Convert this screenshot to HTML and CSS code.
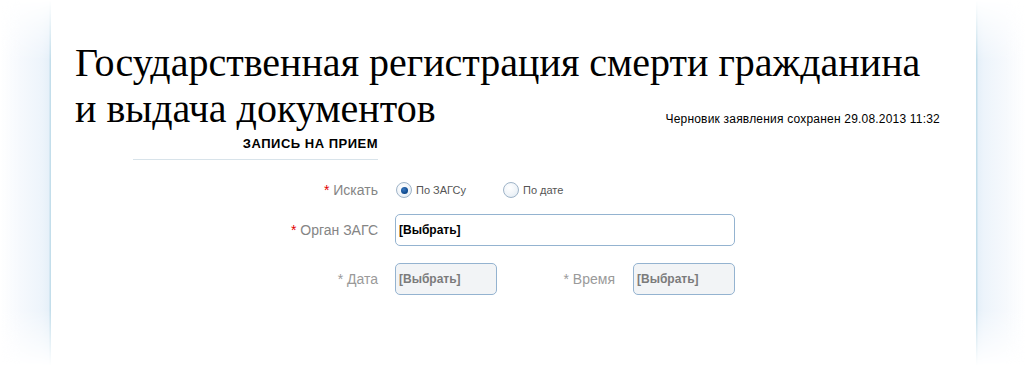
FILE: index.html
```html
<!DOCTYPE html>
<html>

<head>
	<title>Государственная регистрация смерти гражданина</title>
	<meta charset=utf-8>
	<meta name=viewport content="width=device-width, initial-scale=1">
	<link rel="stylesheet" href="styles.css">
</head>

<body>
	<div class="page">
		<div class="glow glow-left"></div>
		<div class="panel">
			<div class="head">
				<h1 class="title">Государственная регистрация смерти гражданина<br>и выдача документов</h1>
				<div class="draft">Черновик заявления сохранен 29.08.2013 11:32</div>
			</div>

			<div class="section">
				<div class="section-name">ЗАПИСЬ НА ПРИЕМ</div>
			</div>

			<div class="form">
				<div class="label"><span class="req">*</span> Искать</div>
				<div class="radios">
					<label class="radio checked"><span class="dot"></span>По ЗАГСу</label>
					<label class="radio"><span class="dot"></span>По дате</label>
				</div>

				<div class="label"><span class="req">*</span> Орган ЗАГС</div>
				<div class="field">[Выбрать]</div>

				<div class="label off"><span class="req">*</span> Дата</div>
				<div class="pair">
					<div class="field small off">[Выбрать]</div>
					<div class="label off pair-label"><span class="req">*</span> Время</div>
					<div class="field small off">[Выбрать]</div>
				</div>
			</div>
		</div>
		<div class="glow glow-right"></div>
	</div>
</body>

</html>
```

FILE: styles.css
```css
body {
	margin: 0;
	background: white;
	font-family: "Liberation Sans", Arial, sans-serif;
}

.page {
	display: flex;
	height: 376px;
}

/* side shadow of the panel */
.glow {
	width: 50px;
	-webkit-mask-image: linear-gradient(to bottom, transparent 0, black 60px, black 310px, transparent 366px);
	mask-image: linear-gradient(to bottom, transparent 0, black 60px, black 310px, transparent 366px);
}

.glow-left {
	width: 51px;
	background: linear-gradient(to right, rgba(255, 255, 255, 0) 0, #f6f9fd 20px, #edf4fb 42px, #e6f0f9 49px, #c3deeb 50px, #c3deeb 51px);
}

.glow-right {
	background: linear-gradient(to left, rgba(255, 255, 255, 0) 0, #f6f9fd 20px, #edf4fb 42px, #e6f0f9 48px, #c3deeb 49px, #c3deeb 50px);
}

.panel {
	flex: 1;
	background: white;
}

.head {
	display: grid;
	padding: 40px 36px 0 24px;
}

.title,
.draft {
	grid-area: 1 / 1;
}

.title {
	margin: 0;
	font-family: "Liberation Serif", "Times New Roman", serif;
	font-weight: normal;
	font-size: 40px;
	line-height: 46px;
	color: black;
}

.draft {
	align-self: end;
	justify-self: end;
	margin-bottom: 6px;
	font-size: 12px;
	line-height: 13px;
	letter-spacing: 0.2px;
	color: black;
}

.section {
	width: 245px;
	margin: 5px 0 0 82px;
	padding-bottom: 8px;
	border-bottom: 1px solid #d8e3ea;
	text-align: right;
}

.section-name {
	font-size: 13px;
	font-weight: bold;
	line-height: 14px;
	letter-spacing: 0.5px;
	color: black;
}

.form {
	display: grid;
	grid-template-columns: 245px 340px;
	column-gap: 17px;
	row-gap: 16px;
	align-items: center;
	margin: 21px 0 0 82px;
}

.label {
	text-align: right;
	font-size: 14px;
	color: #858585;
	white-space: nowrap;
}

.req {
	color: #e20000;
}

.label.off,
.label.off .req {
	color: #9a9a9a;
}

.radios {
	display: flex;
	align-items: center;
	gap: 37px;
	height: 16px;
	margin: 1px 0 0 1px;
}

.radio {
	display: flex;
	align-items: center;
	gap: 4px;
	font-size: 11px;
	color: #555;
}

.dot {
	width: 14px;
	height: 14px;
	border: 1px solid #9fb4c8;
	border-radius: 50%;
	background: radial-gradient(circle at 40% 35%, white 0, #eef3f8 60%, #d9e4ee 100%);
	display: flex;
	align-items: center;
	justify-content: center;
}

.radio.checked .dot::after {
	content: "";
	width: 7px;
	height: 7px;
	border-radius: 50%;
	background: radial-gradient(circle at 40% 35%, #3b78c0 0, #0a4589 70%);
}

.field {
	height: 30px;
	border: 1px solid #94b3d0;
	border-radius: 5px;
	background: white;
	padding: 0 4px 0 3px;
	display: flex;
	align-items: center;
	font-size: 12px;
	font-weight: bold;
	color: black;
}

.pair {
	display: flex;
	align-items: center;
	margin-top: 1px;
}

.field.small {
	width: 93px;
	flex: none;
}

.field.off {
	background: #f2f4f6;
	color: #7b7b7b;
}

.pair-label {
	flex: 1;
	padding-right: 18px;
}
```
